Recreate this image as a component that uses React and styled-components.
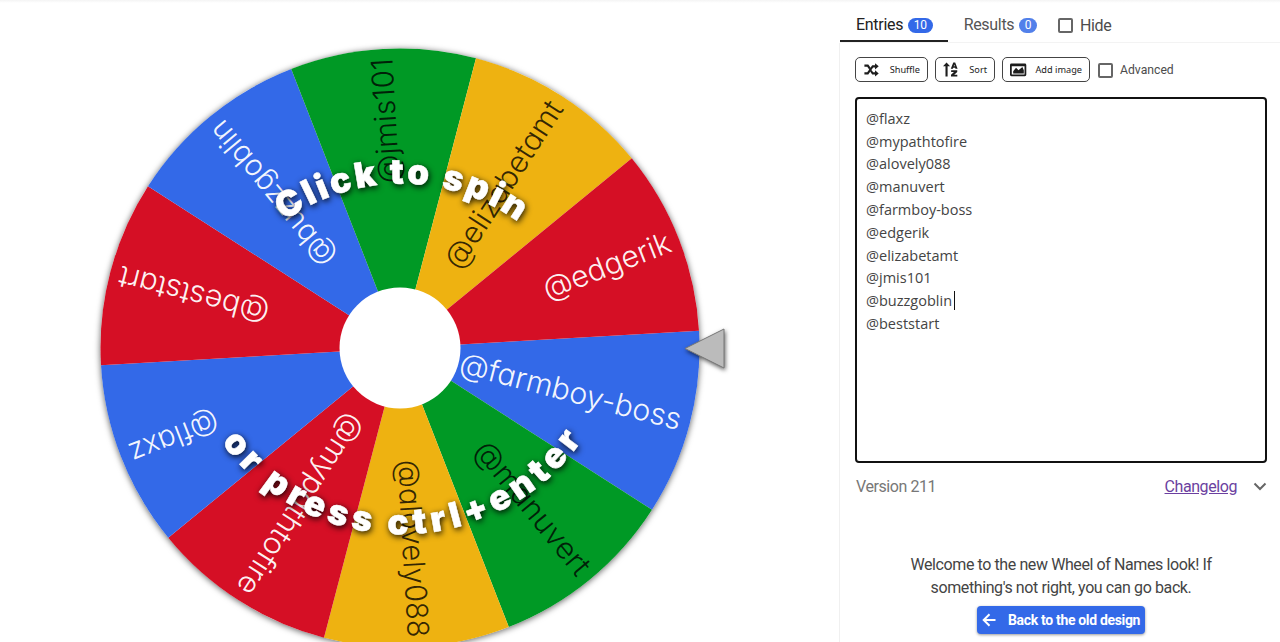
import React from 'react'
import styled, { createGlobalStyle } from "styled-components"

const center = { x: 400, y: 348 };
const radius = 299.5;
const firstAngle = -3.3;
const step = 36;

// slices go clockwise from the pointer, length is the drawn width of the name
const slices = [
    { name: "@farmboy-boss", color: "#3369e8", length: 228 },
    { name: "@manuvert", color: "#009925", length: 164, dark: true },
    { name: "@alovely088", color: "#eeb211", length: 178, dark: true },
    { name: "@mypathtofire", color: "#d50f25", length: 209 },
    { name: "@flaxz", color: "#3369e8", length: 94 },
    { name: "@beststart", color: "#d50f25", length: 154 },
    { name: "@buzzgoblin", color: "#3369e8", length: 179 },
    { name: "@jmis101", color: "#009925", length: 125, dark: true },
    { name: "@elizabetamt", color: "#eeb211", length: 193, dark: true },
    { name: "@edgerik", color: "#d50f25", length: 135 },
];

const entries = [
    "@flaxz",
    "@mypathtofire",
    "@alovely088",
    "@manuvert",
    "@farmboy-boss",
    "@edgerik",
    "@elizabetamt",
    "@jmis101",
    "@buzzgoblin",
    "@beststart",
];
const caretEntry = "@buzzgoblin";

function point(angle) {
    const rad = (angle * Math.PI) / 180;
    return `${center.x + radius * Math.cos(rad)},${center.y + radius * Math.sin(rad)}`;
}

function Wheel() {
    let renderSlices = () => {
        return slices.map((item, i) => {
            const start = firstAngle + i * step;
            return (
                <path
                    key={item.name}
                    fill={item.color}
                    d={`M${center.x},${center.y}L${point(start)}A${radius},${radius} 0 0 1 ${point(start + step)}Z`}
                />
            );
        });
    };
    let renderNames = () => {
        return slices.map((item, i) => (
            <SliceName
                key={item.name}
                $dark={item.dark}
                x={290}
                y={9}
                textLength={item.length}
                lengthAdjust="spacingAndGlyphs"
                transform={`translate(${center.x} ${center.y}) rotate(${firstAngle + (i + 0.5) * step})`}
            >
                {item.name}
            </SliceName>
        ));
    };
    return (
        <WheelSvg viewBox="0 0 840 642">
            <defs>
                <path id="topArc" d="M284.500,221A200,200 0 0 1 521,224" />
                <path id="bottomArc" d="M221.500,442A221,221 0 0 0 583,439" />
            </defs>
            <WheelDisc>
                <circle cx={center.x} cy={center.y} r={radius} fill="#fff" />
                {renderSlices()}
            </WheelDisc>
            {renderNames()}
            <circle cx={center.x} cy={center.y} r="60.5" fill="#fff" />
            <Hint>
                <textPath href="#topArc" textLength="249" lengthAdjust="spacing">Click to spin</textPath>
            </Hint>
            <Hint>
                <textPath href="#bottomArc" textLength="421" lengthAdjust="spacing">or press ctrl+enter</textPath>
            </Hint>
            <Pointer d="M685,348.500L724,329V368Z" />
        </WheelSvg>
    );
}

function App() {
    return (
        <>
        <GlobalStyle />
        <Page>
            <WheelSide>
                <Wheel />
            </WheelSide>
            <Panel>
                <Tabs>
                    <Tab $active>Entries <Badge>10</Badge></Tab>
                    <Tab>Results <Badge $muted>0</Badge></Tab>
                    <CheckLabel><CheckBox />Hide</CheckLabel>
                </Tabs>
                <PanelBody>
                    <Toolbar>
                        <ToolButton $width={73}>
                            <ToolIcon viewBox="0 0 24 24">
                                <path d="M17 3l5.200 4.500L17 12V9h-2.700L7.500 19H2v-3h4L13 6h4zM2 5h5.500l3 4.300-1.800 2.600L6 8H2zM17 13l5.200 4.500L17 22v-3h-4l-2.700-3.800 1.800-2.600L14.300 16H17z" />
                            </ToolIcon>
                            Shuffle
                        </ToolButton>
                        <ToolButton $width={60}>
                            <ToolIcon viewBox="0 0 24 24">
                                <path d="M5 2L0 7.500H3.500V22H6.500V7.500H10zM14.500 2L11 11h3l.5-1.600h2.600l.5 1.600h3L17.200 2zM15.900 4.800l.8 2.600h-1.600zM11.500 13v2.600h4L11.300 19.500V22h8.900v-2.600h-4.400l4.300-4V13z" />
                            </ToolIcon>
                            Sort
                        </ToolButton>
                        <ToolButton $width={88}>
                            <ToolIcon viewBox="0 0 24 24">
                                <path fillRule="evenodd" d="M2 3.500h19a2 2 0 0 1 2 2v14a2 2 0 0 1-2 2H2a2 2 0 0 1-2-2V5.500a2 2 0 0 1 2-2zM2.500 7.500v11.500h18V7.500zM4.500 17.500v-3l4-5 3.500 3.500 5.500-4.500 2 4.500v4.500z" />
                            </ToolIcon>
                            Add image
                        </ToolButton>
                        <CheckLabel $small><CheckBox />Advanced</CheckLabel>
                    </Toolbar>
                    <EntryBox>
                        {entries.map((item) => (
                            <Entry key={item}>{item}{item === caretEntry && <Caret />}</Entry>
                        ))}
                    </EntryBox>
                    <VersionRow>
                        <Version>Version 211</Version>
                        <Changelog href="#">Changelog</Changelog>
                        <Chevron viewBox="0 0 14 9"><path d="M1.500 1.500L7 7l5.500-5.500" /></Chevron>
                    </VersionRow>
                    <Welcome>
                        Welcome to the new Wheel of Names look! If
                        <br />
                        something's not right, you can go back.
                    </Welcome>
                    <BackButton>
                        <BackIcon viewBox="0 0 14 14"><path d="M13.500 7H2M7.500 1.200L1.700 7l5.800 5.800" /></BackIcon>
                        Back to the old design
                    </BackButton>
                </PanelBody>
            </Panel>
        </Page>
        </>
    )
}

const GlobalStyle = createGlobalStyle`
    * {
        box-sizing: border-box;
    }
    body {
        margin: 0;
        overflow: hidden;
        background: #fff;
        font-family: Roboto, "Liberation Sans", sans-serif;
    }
`;
const Page = styled.div`
    display: flex;
    width: 1280px;
    height: 642px;
    overflow: hidden;
    background: linear-gradient(#f4f4f4, #fff 3px);
`;
const WheelSide = styled.main`
    width: 839px;
    flex: none;
`;
const WheelSvg = styled.svg`
    display: block;
    width: 840px;
    height: 642px;
`;
const WheelDisc = styled.g`
    filter: drop-shadow(0 1px 3px rgba(0, 0, 0, 0.6));
`;
const SliceName = styled.text`
    font-family: Inter, "Open Sans", sans-serif;
    font-size: 30px;
    font-weight: 350;
    font-feature-settings: "cv11";
    text-anchor: end;
    fill: ${(props) => (props.$dark ? "rgba(0, 0, 0, 0.78)" : "rgba(255, 255, 255, 0.95)")};
`;
const Hint = styled.text`
    font-family: Inter, "Liberation Sans", sans-serif;
    font-size: 35px;
    font-weight: 900;
    fill: #fff;
    stroke: #fff;
    stroke-width: 0.5px;
    filter: drop-shadow(1px 2px 3px rgba(0, 0, 0, 0.9));
`;
const Pointer = styled.path`
    fill: #bbb;
    stroke: #777;
    stroke-width: 1px;
    filter: drop-shadow(1px 2px 2px rgba(0, 0, 0, 0.6));
`;
const Panel = styled.aside`
    display: flex;
    flex-direction: column;
    width: 441px;
`;
const PanelBody = styled.div`
    display: flex;
    flex: 1;
    flex-direction: column;
    padding: 14px 13px 0 15px;
    border-left: 1px solid #f0f0f0;
`;
const Tabs = styled.div`
    display: flex;
    height: 43px;
    margin-left: 1px;
    padding-top: 8px;
    border-bottom: 1px solid #f3f3f3;
`;
const Tab = styled.div`
    display: flex;
    align-items: center;
    gap: 5px;
    height: 34px;
    padding: 1px 15px 0 16px;
    font-size: 16px;
    letter-spacing: -0.3px;
    color: ${(props) => (props.$active ? "#222" : "#555")};
    border-bottom: ${(props) => (props.$active ? "2px solid #222" : "2px solid transparent")};
`;
const Badge = styled.span`
    height: 15px;
    margin-top: 1px;
    padding: 0 5.5px;
    border-radius: 8px;
    background: ${(props) => (props.$muted ? "#5280ea" : "#3369e8")};
    color: #fff;
    font-size: 12px;
    letter-spacing: 0;
    line-height: 15px;
`;
const CheckLabel = styled.label`
    display: flex;
    align-items: center;
    gap: 7px;
    height: ${(props) => (props.$small ? "26px" : "35px")};
    margin-left: ${(props) => (props.$small ? "1px" : "6px")};
    font-size: ${(props) => (props.$small ? "12.2px" : "16px")};
    letter-spacing: ${(props) => (props.$small ? "0" : "-0.4px")};
    color: #4c4c4c;
`;
const CheckBox = styled.span`
    width: 15px;
    height: 15px;
    border: 2px solid #666;
    border-radius: 2px;
`;
const Toolbar = styled.div`
    display: flex;
    gap: 7px;
`;
const ToolButton = styled.div`
    display: flex;
    align-items: center;
    justify-content: space-between;
    width: ${(props) => props.$width}px;
    height: 25px;
    padding: 0 7px;
    border: 1px solid #444;
    border-radius: 5px;
    color: #222;
    font-family: "Noto Sans", sans-serif;
    font-size: 9.2px;
`;
const ToolIcon = styled.svg`
    width: 17px;
    height: 17px;
    fill: #1d1d1d;
`;
const EntryBox = styled.div`
    width: 412px;
    height: 366px;
    margin-top: 14px;
    padding: 8px 9px;
    border: 2px solid #111;
    border-radius: 4px;
`;
const Entry = styled.div`
    display: flex;
    align-items: center;
    height: 22.8px;
    color: #444;
    font-family: "Open Sans", sans-serif;
    font-size: 14.5px;
`;
const Caret = styled.span`
    width: 1px;
    height: 19px;
    margin-left: 2px;
    background: #111;
`;
const VersionRow = styled.div`
    display: flex;
    align-items: center;
    height: 24px;
    margin-top: 11px;
    padding-left: 1px;
    font-size: 16px;
    letter-spacing: -0.42px;
`;
const Version = styled.span`
    flex: 1;
    color: #777;
`;
const Changelog = styled.a`
    color: #6b3fa0;
`;
const Chevron = styled.svg`
    width: 14px;
    height: 9px;
    margin-left: 16px;
    fill: none;
    stroke: #666;
    stroke-width: 2px;
`;
const Welcome = styled.p`
    margin: 55px 0 0 0;
    color: #444;
    font-size: 16px;
    letter-spacing: -0.4px;
    line-height: 23px;
    text-align: center;
`;
const BackButton = styled.div`
    display: flex;
    align-items: center;
    align-self: center;
    gap: 12px;
    width: 168px;
    height: 28px;
    margin-top: 7px;
    padding-left: 5px;
    border-radius: 4px;
    background: #3369e8;
    box-shadow: 0 1px 3px rgba(0, 0, 0, 0.4);
    color: #fff;
    font-size: 14px;
    font-weight: 700;
    letter-spacing: -0.33px;
    white-space: nowrap;
`;
const BackIcon = styled.svg`
    flex: none;
    width: 14px;
    height: 14px;
    fill: none;
    stroke: #fff;
    stroke-width: 2px;
`;
export default App;
